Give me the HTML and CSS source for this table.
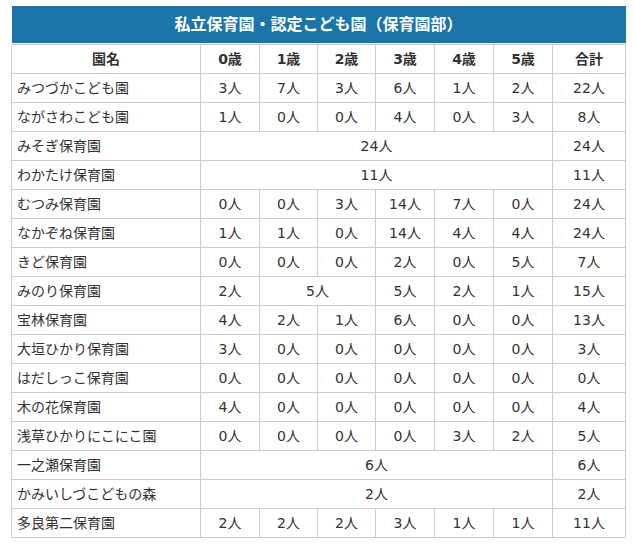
FILE: index.html
```html
<!DOCTYPE html>
<html lang="ja">
<head>
<meta charset="utf-8">
<link rel="stylesheet" href="styles.css">
</head>
<body>
<table class="tbl">
<colgroup>
<col class="c-name"><col class="c-age"><col class="c-age2"><col class="c-age2"><col class="c-age"><col class="c-age"><col class="c-age"><col class="c-sum">
</colgroup>
<thead>
<tr><th class="title" colspan="8">私立保育園・認定こども園（保育園部）</th></tr>
<tr class="head"><th>園名</th><th>0歳</th><th>1歳</th><th>2歳</th><th>3歳</th><th>4歳</th><th>5歳</th><th>合計</th></tr>
</thead>
<tbody>
<tr><td class="name">みつづかこども園</td><td>3人</td><td>7人</td><td>3人</td><td>6人</td><td>1人</td><td>2人</td><td>22人</td></tr>
<tr><td class="name">ながさわこども園</td><td>1人</td><td>0人</td><td>0人</td><td>4人</td><td>0人</td><td>3人</td><td>8人</td></tr>
<tr><td class="name">みそぎ保育園</td><td colspan="6">24人</td><td>24人</td></tr>
<tr><td class="name">わかたけ保育園</td><td colspan="6">11人</td><td>11人</td></tr>
<tr><td class="name">むつみ保育園</td><td>0人</td><td>0人</td><td>3人</td><td>14人</td><td>7人</td><td>0人</td><td>24人</td></tr>
<tr><td class="name">なかぞね保育園</td><td>1人</td><td>1人</td><td>0人</td><td>14人</td><td>4人</td><td>4人</td><td>24人</td></tr>
<tr><td class="name">きど保育園</td><td>0人</td><td>0人</td><td>0人</td><td>2人</td><td>0人</td><td>5人</td><td>7人</td></tr>
<tr><td class="name">みのり保育園</td><td>2人</td><td colspan="2">5人</td><td>5人</td><td>2人</td><td>1人</td><td>15人</td></tr>
<tr><td class="name">宝林保育園</td><td>4人</td><td>2人</td><td>1人</td><td>6人</td><td>0人</td><td>0人</td><td>13人</td></tr>
<tr><td class="name">大垣ひかり保育園</td><td>3人</td><td>0人</td><td>0人</td><td>0人</td><td>0人</td><td>0人</td><td>3人</td></tr>
<tr><td class="name">はだしっこ保育園</td><td>0人</td><td>0人</td><td>0人</td><td>0人</td><td>0人</td><td>0人</td><td>0人</td></tr>
<tr><td class="name">木の花保育園</td><td>4人</td><td>0人</td><td>0人</td><td>0人</td><td>0人</td><td>0人</td><td>4人</td></tr>
<tr><td class="name">浅草ひかりにこにこ園</td><td>0人</td><td>0人</td><td>0人</td><td>0人</td><td>3人</td><td>2人</td><td>5人</td></tr>
<tr><td class="name">一之瀬保育園</td><td colspan="6">6人</td><td>6人</td></tr>
<tr><td class="name">かみいしづこどもの森</td><td colspan="6">2人</td><td>2人</td></tr>
<tr><td class="name">多良第二保育園</td><td>2人</td><td>2人</td><td>2人</td><td>3人</td><td>1人</td><td>1人</td><td>11人</td></tr>
</tbody>
</table>
</body>
</html>
```
FILE: styles.css
```css
html, body {
  margin: 0;
  padding: 0;
  background: #fff;
}
body {
  padding: 6px 0 0 11px;
  font-family: "DejaVu Sans", "Noto Sans CJK JP", sans-serif;
  color: #333;
  font-size: 14px;
}
.tbl {
  border-collapse: collapse;
  table-layout: fixed;
  width: 614px;
}
.c-name { width: 189px; }
.c-age { width: 59px; }
.c-age2 { width: 58px; }
.c-sum { width: 73px; }
.tbl th, .tbl td {
  border: 1px solid #cccccc;
  padding: 0;
  height: 28px;
  line-height: 28px;
  text-align: center;
  font-weight: normal;
  white-space: nowrap;
  overflow: hidden;
}
.tbl th.title {
  background: #1b75a8;
  color: #fff;
  font-weight: bold;
  font-size: 16px;
  height: 38px;
  line-height: 38px;
  border: 0;
  border-bottom: 1px solid #cccccc;
  box-shadow: inset 0 -1px 0 #e3eef5;
}
.head th {
  font-weight: bold;
}
.tbl td.name {
  text-align: left;
  padding-left: 5px;
}
```
